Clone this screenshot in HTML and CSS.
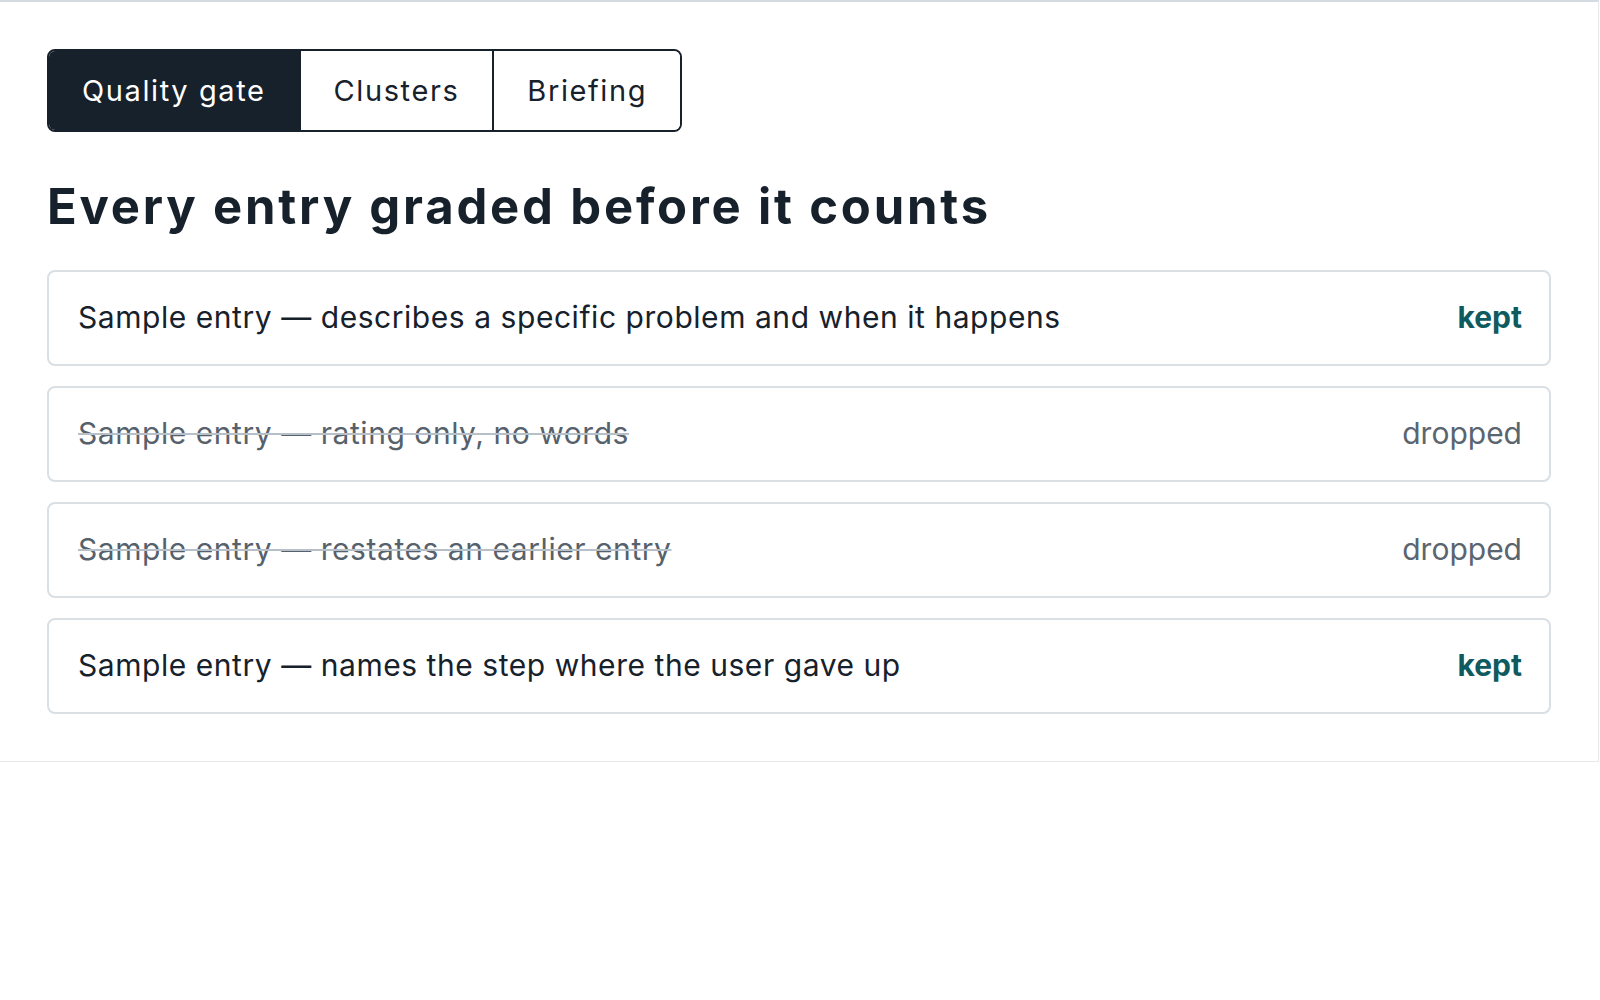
FILE: index.html
```html
<!DOCTYPE html>
<html lang="en">
<head>
  <meta charset="UTF-8" />
  <meta name="viewport" content="width=device-width, initial-scale=1.0" />
  <title>Quality gate</title>
  <link rel="stylesheet" href="styles.css">
</head>
<body>
  <div class="panel">
    <div class="tabs">
      <button class="tab active">Quality gate</button>
      <button class="tab">Clusters</button>
      <button class="tab">Briefing</button>
    </div>

    <h2>Every entry graded before it counts</h2>

    <div class="entries">
      <div class="entry">
        <span class="text">Sample entry — describes a specific problem and when it happens</span>
        <span class="status kept">kept</span>
      </div>
      <div class="entry dropped">
        <span class="text">Sample entry — rating only, no words</span>
        <span class="status">dropped</span>
      </div>
      <div class="entry dropped">
        <span class="text">Sample entry — restates an earlier entry</span>
        <span class="status">dropped</span>
      </div>
      <div class="entry">
        <span class="text">Sample entry — names the step where the user gave up</span>
        <span class="status kept">kept</span>
      </div>
    </div>
  </div>
</body>
</html>
```

FILE: styles.css
```css
body {
  margin: 0;
  font-family: Inter, 'Noto Sans', sans-serif;
  background: #fff;
  color: #17212b;
}

.panel {
  width: 1599px;
  box-sizing: border-box;
  border-top: 2px solid #d4dbe1;
  border-right: 1px solid #e6e8eb;
  border-bottom: 1px solid #e6e8eb;
  padding: 47px;
}

.tabs {
  display: inline-flex;
  border: 2px solid #17212b;
  border-radius: 8px;
  overflow: hidden;
}

.tab {
  font-family: inherit;
  font-size: 29px;
  letter-spacing: 1.6px;
  color: #17212b;
  background: #fff;
  border: none;
  padding: 0 33px;
  height: 79px;
  cursor: pointer;
}

.tab + .tab {
  border-left: 2px solid #17212b;
}

.tab.active {
  background: #17212b;
  color: #fff;
}

h2 {
  margin: 44px 0 32px;
  font-size: 49px;
  font-weight: 700;
  line-height: 62px;
  letter-spacing: 2.8px;
}

.entries {
  display: flex;
  flex-direction: column;
  gap: 20px;
}

.entry {
  display: flex;
  justify-content: space-between;
  align-items: center;
  border: 2px solid #dadfe4;
  border-radius: 8px;
  padding: 23px 27px 25px 29px;
  font-size: 30px;
  line-height: 44px;
}

.text {
  letter-spacing: 0.55px;
}

.entry.dropped .text {
  color: #56616c;
  text-decoration: line-through;
  text-decoration-color: #b7c0c8;
  text-decoration-thickness: 2px;
}

.status {
  color: #5a6570;
}

.status.kept {
  color: #0f5a5e;
  font-weight: 700;
}
```
